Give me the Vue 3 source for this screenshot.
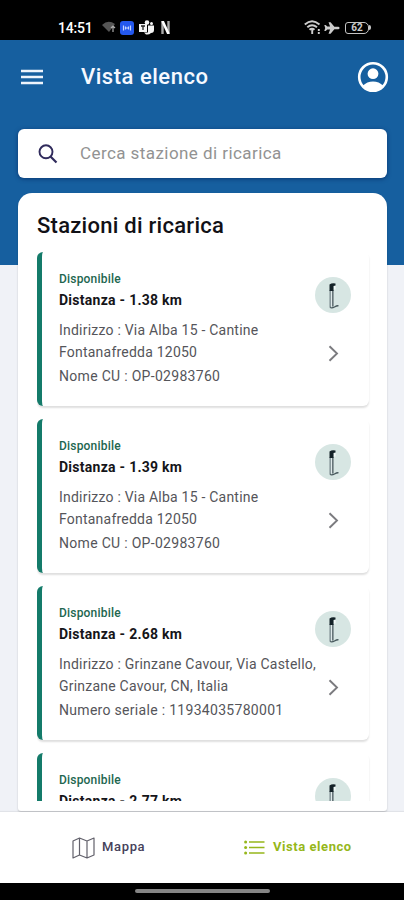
<script setup>
const stations = [
  { distance: '1.38', address: ['Via Alba 15 - Cantine', 'Fontanafredda 12050'], label: 'Nome CU', code: 'OP-02983760' },
  { distance: '1.39', address: ['Via Alba 15 - Cantine', 'Fontanafredda 12050'], label: 'Nome CU', code: 'OP-02983760' },
  { distance: '2.68', address: ['Grinzane Cavour, Via Castello,', 'Grinzane Cavour, CN, Italia'], label: 'Numero seriale', code: '11934035780001' },
  { distance: '2.77' },
]
</script>

<template>
  <div class="phone">
    <div class="status">
      <span class="clock">14:51</span>
      <svg class="s-wifi" width="14" height="13" viewBox="0 0 14 13">
        <path d="M0 4Q6-2 13 3L7 11Z" fill="#555" />
        <path d="M11 5v6M9 7l2-2 2 2" stroke="#aaa" stroke-width="1.2" fill="none" />
      </svg>
      <svg class="s-blue" width="14" height="14" viewBox="0 0 14 14">
        <rect width="14" height="14" rx="3" fill="#2458ee" />
        <path d="M3.500 4.500v5M5.500 7h3M10.500 4.500v5M5.500 5.500v3M8.500 5.500v3" stroke="#c5d4ff" stroke-width="1.200" />
      </svg>
      <svg class="s-teams" width="15" height="15" viewBox="0 0 15 15">
        <circle cx="8" cy="2.500" r="2.300" fill="#f4f4f4" />
        <circle cx="12.500" cy="3.500" r="1.500" fill="#f4f4f4" />
        <path d="M0 4h8v8H0zM9 5.500h6v4.500q0 3-3 3-2 2-5 1.500l-2-2h4z" fill="#f4f4f4" />
        <path d="M2 6h4M4 6v4" stroke="#222" stroke-width="1.300" />
      </svg>
      <svg class="s-n" width="9" height="13" viewBox="0 0 9 13">
        <path d="M1.500 13V0M7.500 13V0" stroke="#aaa" stroke-width="2.400" />
        <path d="M1.500 0L7.500 13" stroke="#fff" stroke-width="2.600" />
      </svg>
      <div class="spacer"></div>
      <svg class="s-net" width="18" height="15" viewBox="0 0 18 15">
        <g fill="none" stroke="#ccc" stroke-width="1.900">
          <path d="M.8 4.500Q8-2 15.500 4.500M3.300 7.300Q8 3 13 7.300M5.500 9.800Q8 7.500 10.500 9.800" />
          <path d="M8.200 9v5M14.800 9v2M14.800 12v2" />
        </g>
      </svg>
      <svg class="s-plane" width="16" height="14" viewBox="0 0 17 14">
        <path d="M16.500 7q0-1.400-1.500-1.400h-4L7 1H4.800L6.500 5.500H3.500L1.800 3.800H.3L1.300 7 .3 10.200h1.500L3.500 8.500h3L4.800 13H7l4-4.600h4q1.500 0 1.500-1.400z" fill="#ccc" />
      </svg>
      <div class="battery"><span>62</span></div>
      <i class="knob"></i>
    </div>

    <header class="top">
      <div class="bar">
        <svg class="burger" width="22" height="16" viewBox="0 0 22 16">
          <path d="M0 2h22M0 8h22M0 14h22" stroke="#eef4fc" stroke-width="2.600" />
        </svg>
        <h1>Vista elenco</h1>
        <svg class="user" width="32" height="32" viewBox="0 0 32 32">
          <circle cx="16" cy="16" r="13.800" fill="none" stroke="#fff" stroke-width="2.600" />
          <circle cx="16" cy="12.700" r="5.400" fill="#fff" />
          <path d="M5.800 24.800Q10 20.500 16 20.500t10.200 4.300Q22 30 16 30T5.800 24.800z" fill="#fff" />
        </svg>
      </div>
      <div class="search">
        <svg width="20" height="20" viewBox="0 0 20 20" fill="none" stroke="#302b5c">
          <circle cx="8" cy="7.800" r="6.500" stroke-width="1.900" />
          <path d="M12.500 12.500L18.500 18.500" stroke-width="2.200" />
        </svg>
        <span>Cerca stazione di ricarica</span>
      </div>
    </header>

    <main class="panel">
      <h2>Stazioni di ricarica</h2>
      <div class="list">
        <article v-for="(s, i) in stations" :key="i" class="card">
          <div class="info">
            <div class="state">Disponibile</div>
            <div class="distance">Distanza - {{ s.distance }} km</div>
            <template v-if="s.address">
              <div class="line">Indirizzo : {{ s.address[0] }}</div>
              <div class="line">{{ s.address[1] }}</div>
              <div class="line code">{{ s.label }} : {{ s.code }}</div>
            </template>
          </div>
          <div class="side">
            <svg width="36" height="36" viewBox="0 0 36 36">
              <circle cx="18" cy="18" r="18" fill="#d7e6e3" />
              <path d="M15.200 13V30.500" stroke="#6c7c81" stroke-width="1.300" />
              <path d="M17.800 13V29.500" stroke="#3a484e" stroke-width="1.300" />
              <path d="M16.500 14V29" stroke="#dfe9ea" stroke-width="1.300" />
              <path d="M14.500 7.500Q17 5.500 20.500 6.500V8.500L18.500 9V14H14.500z" fill="#142228" />
              <path d="M19.800 9V12.500" stroke="#f6fafa" stroke-width="1.500" />
              <path d="M15 30.500Q17 31.500 19.500 30T23.500 28.800" fill="none" stroke="#46575c" stroke-width="1.300" />
            </svg>
            <svg v-if="s.address" class="chevron" width="11" height="17" viewBox="0 0 11 17">
              <path d="M1.500 1.200L9 8.500L1.500 15.800" fill="none" stroke="#7b7b7f" stroke-width="1.900" />
            </svg>
          </div>
        </article>
      </div>
    </main>

    <nav class="tabs">
      <div class="tab map">
        <svg width="23" height="22" viewBox="0 0 23 22" fill="none" stroke="#62616b" stroke-width="1.200" stroke-linejoin="round">
          <path d="M1 4L7.500 1L15 4L22 1V18L15 21L7.500 18L1 21zM7.500 1V18M15 4V21" />
        </svg>
        <span>Mappa</span>
      </div>
      <div class="tab active">
        <svg width="21" height="15" viewBox="0 0 21 15" stroke="#96b71b" fill="#96b71b">
          <path d="M5 2H20.500M5 7.500H20.500M5 13H20.500" stroke-width="1.400" />
          <g stroke="none"><circle cx="1.600" cy="2" r="1.500" /><circle cx="1.600" cy="7.500" r="1.500" /><circle cx="1.600" cy="13" r="1.500" /></g>
        </svg>
        <span>Vista elenco</span>
      </div>
    </nav>
    <div class="home"><div></div></div>
  </div>
</template>

<style>
body { margin: 0; }
</style>

<style scoped>
* { box-sizing: border-box; }
svg { display: block; flex: none; }
.phone {
  width: 404px; height: 900px; display: flex; flex-direction: column; overflow: hidden;
  background: #f0f2f7; font-family: Roboto, sans-serif; white-space: nowrap;
}
.status {
  height: 40px; flex: none; background: #000; display: flex; align-items: center;
  padding: 15px 33px 0 58px; color: #fff;
}
.clock { width: 44px; font-size: 14px; font-weight: 500; letter-spacing: -.2px; }
.s-blue { margin-left: 4px; }
.s-teams { margin-left: 5px; }
.s-n { margin-left: 7px; }
.spacer { flex: 1; }
.s-plane { margin-left: 2px; }
.battery {
  width: 24px; height: 12px; margin-left: 5px; border: 1.500px solid #c4c4c4; border-radius: 3px 5px 5px 3px;
  font-size: 10px; line-height: 10px; font-weight: 700; color: #ccc; text-align: center;
}
.knob { width: 2px; height: 5px; border-radius: 0 2px 2px 0; background: #c4c4c4; }
.top { height: 225px; flex: none; background: #165f9f; padding: 0 17px 0 18px; }
.bar { height: 73px; display: flex; align-items: center; padding-left: 3px; }
.bar h1 {
  flex: 1; margin: 0 0 0 38px; color: #f6f9ff; font-size: 22px; line-height: 28px;
  font-weight: 500; letter-spacing: .52px;
}
.user { margin-right: -2px; }
.search {
  height: 49px; margin-top: 16px; display: flex; align-items: center; padding-left: 20px; gap: 22px;
  background: #fff; border-radius: 6px; box-shadow: 0 1px 4px rgba(0, 25, 80, .55);
}
.search span { color: #929292; font-size: 17px; line-height: 20px; padding-bottom: 2px; letter-spacing: .43px; }
.panel {
  width: 369px; height: 618px; flex: none; margin: -72px 0 0 18px; padding: 18px 18px 10px 19px;
  display: flex; flex-direction: column; background: #fff; border-radius: 14px 14px 3px 3px;
  box-shadow: 0 1px 2px rgba(0, 0, 0, .2);
}
.panel h2 { margin: 0; height: 41px; font-size: 22px; line-height: 30px; font-weight: 500; letter-spacing: .26px; color: #111116; }
.list {
  flex: 1; min-height: 0; overflow: hidden; display: flex; flex-direction: column; gap: 13px;
  padding-right: 4px; margin-right: -4px;
}
.card {
  height: 154px; flex: none; display: flex; justify-content: space-between; padding: 19px 18px 0 17px;
  background: #fff; border-left: 5px solid #147b6a; border-radius: 6px;
  box-shadow: 0 2px 2px rgba(0, 0, 0, .13);
}
.state { color: #22664f; font-size: 12px; line-height: 16px; font-weight: 500; letter-spacing: .2px; }
.distance { color: #151519; font-size: 14px; line-height: 22px; margin: 2px 0 8px; font-weight: 700; letter-spacing: .27px; }
.line { color: #55555a; font-size: 14px; line-height: 22px; letter-spacing: .22px; }
.code { margin-top: 2px; letter-spacing: .3px; }
.info { width: 256px; }
.side { width: 36px; flex: none; margin-top: 6px; }
.chevron { margin: 32px 0 0 13px; }
.tabs { height: 71px; margin-top: 1px; flex: none; background: #fff; display: flex; align-items: center; z-index: 1; box-shadow: 0 -1px 1px rgba(0, 0, 0, .06); }
.tab { display: flex; align-items: center; font-size: 13px; font-weight: 500; width: 172px; }
.tab span { padding-bottom: 1px; line-height: 18px; }
.map { padding-left: 72px; gap: 7px; color: #45415a; letter-spacing: .65px; }
.tab.active { padding-left: 72px; gap: 8px; color: #96b71b; font-weight: 700; width: 232px; letter-spacing: .55px; }
.home { flex: 1; background: #000; display: flex; justify-content: center; padding-top: 6px; }
.home div { width: 135px; height: 4px; border-radius: 2px; background: #858585; }
</style>
